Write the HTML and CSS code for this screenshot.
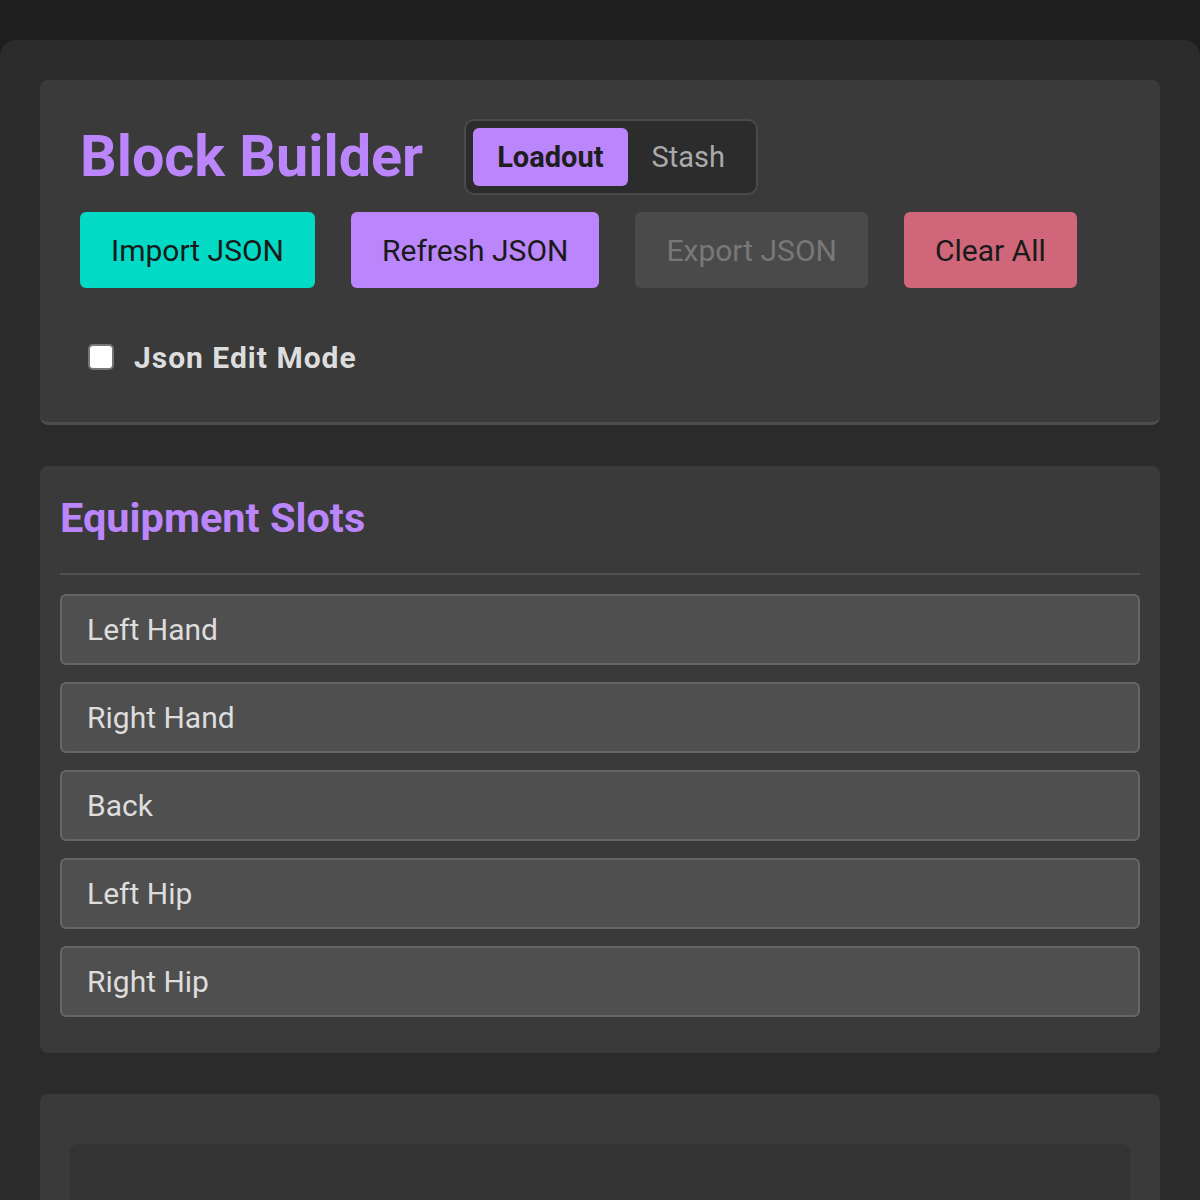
FILE: index.html
```html
<!DOCTYPE html>
<html>
<head>
<meta charset="utf-8">
<link rel="stylesheet" href="styles.css">
</head>
<body>
<div class="app">
  <section class="panel top-panel">
    <div class="header">
      <h1 class="title">Block Builder</h1>
      <div class="toggle">
        <button class="tab active">Loadout</button>
        <button class="tab">Stash</button>
      </div>
    </div>
    <div class="actions">
      <button class="btn btn-import">Import JSON</button>
      <button class="btn btn-refresh">Refresh JSON</button>
      <button class="btn btn-export">Export JSON</button>
      <button class="btn btn-clear">Clear All</button>
    </div>
    <label class="check-row">
      <input type="checkbox" class="check">
      <span class="check-label">Json Edit Mode</span>
    </label>
  </section>

  <section class="panel slots-panel">
    <h2 class="section-title">Equipment Slots</h2>
    <div class="divider"></div>
    <div class="slots">
      <div class="slot">Left Hand</div>
      <div class="slot">Right Hand</div>
      <div class="slot">Back</div>
      <div class="slot">Left Hip</div>
      <div class="slot">Right Hip</div>
    </div>
  </section>

  <section class="panel bottom-panel">
    <div class="inner-box"></div>
  </section>
</div>
</body>
</html>
```

FILE: styles.css
```css
* { box-sizing: border-box; }
html, body { margin: 0; padding: 0; }
body {
  background: #1e1e1e;
  padding-top: 40px;
  font-family: Roboto, "Liberation Sans", Arial, sans-serif;
  height: 1200px;
  overflow: hidden;
}
.app {
  background: #2b2b2b;
  border-radius: 16px 16px 0 0;
  padding: 40px;
  min-height: 1160px;
}
.panel {
  background: #3a3a3a;
  border-radius: 8px;
}
.top-panel {
  padding: 39px 40px 48px;
  border-bottom: 3px solid #4d4d4d;
}
.header {
  display: flex;
  align-items: center;
  gap: 41px;
}
.title {
  margin: 0;
  font-size: 57.5px;
  font-weight: 700;
  color: #bb86fc;
  line-height: 1;
}
.toggle {
  display: flex;
  background: #2c2c2c;
  border: 2px solid #4a4a4a;
  border-radius: 10px;
  padding: 7px;
  height: 76px;
}
.tab {
  font-family: inherit;
  border: none;
  background: transparent;
  color: #aaaaaa;
  font-size: 29px;
  padding: 0 24px;
  border-radius: 6px;
  height: 58px;
}
.tab.active {
  background: #bb86fc;
  color: #1e1e1e;
  font-weight: 700;
}
.actions {
  display: flex;
  gap: 36px;
  margin-top: 17px;
}
.btn {
  font-family: inherit;
  font-size: 30px;
  height: 76px;
  padding: 0 31px;
  border: none;
  border-radius: 6px;
  color: #1a1a1a;
}
.btn-import { background: #03dac6; }
.btn-refresh { background: #bb86fc; }
.btn-export { background: #4a4a4a; color: #787878; }
.btn-clear { background: #cf6679; }
.check-row {
  display: flex;
  align-items: center;
  gap: 20px;
  margin-top: 52px;
  padding-left: 8px;
  height: 34px;
}
.check {
  appearance: none;
  -webkit-appearance: none;
  margin: 0;
  width: 26px;
  height: 26px;
  background: #ffffff;
  border: 2px solid #767676;
  border-radius: 5px;
}
.check-label {
  font-size: 30px;
  font-weight: 700;
  letter-spacing: 1px;
  color: #dddddd;
}
.slots-panel {
  margin-top: 41px;
  padding: 20px 20px 36px;
}
.section-title {
  margin: 8px 0 0;
  font-size: 41.5px;
  font-weight: 700;
  color: #bb86fc;
  line-height: 47px;
}
.divider {
  height: 2px;
  background: #515151;
  margin-top: 32px;
}
.slots {
  display: flex;
  flex-direction: column;
  gap: 17px;
  margin-top: 19px;
}
.slot {
  height: 71px;
  background: #4f4f4f;
  border: 2px solid #666666;
  border-radius: 6px;
  padding: 0 25px;
  display: flex;
  align-items: center;
  font-size: 30px;
  color: #dddddd;
}
.bottom-panel {
  margin-top: 41px;
  padding: 50px 30px 0;
  height: 200px;
}
.inner-box {
  background: #333333;
  border-radius: 8px;
  height: 200px;
}
```
